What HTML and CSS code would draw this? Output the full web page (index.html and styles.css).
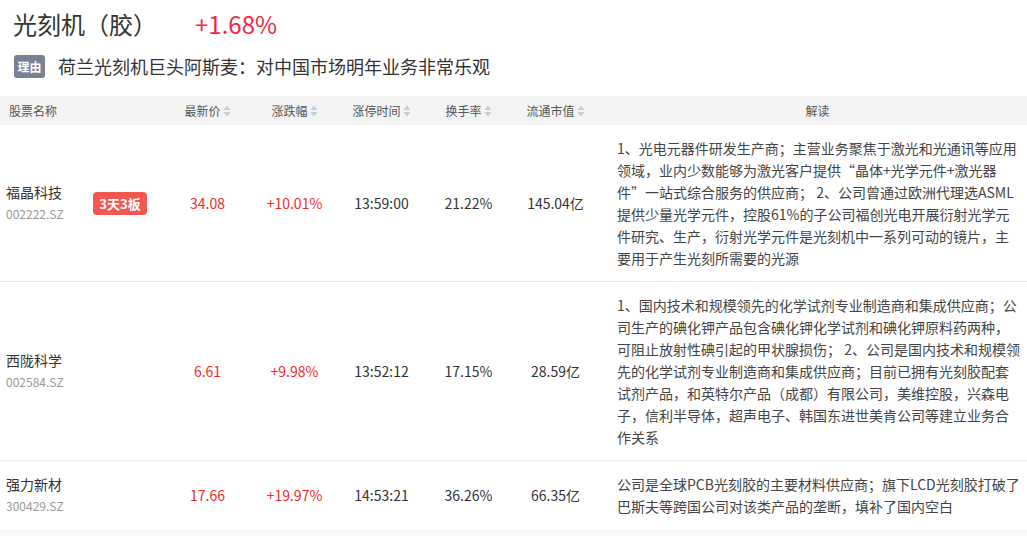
FILE: index.html
```html
<!DOCTYPE html>
<html lang="zh-CN">
<head>
<meta charset="utf-8">
<title>光刻机（胶）</title>
<link rel="stylesheet" href="styles.css">
</head>
<body>
<div class="page">
  <div class="head">
    <h1 class="title">光刻机（胶）</h1>
    <span class="pct">+1.68%</span>
  </div>
  <div class="reason">
    <span class="reason-tag">理由</span>
    <span class="reason-text">荷兰光刻机巨头阿斯麦：对中国市场明年业务非常乐观</span>
  </div>

  <div class="table">
    <div class="row thead">
      <div class="th th-name">股票名称</div>
      <div class="th"></div>
      <div class="th sortable">最新价<svg class="sort" viewBox="0 0 8 12"><path d="M4 0.5 L7.5 5 L0.5 5 Z M4 11.5 L7.5 7 L0.5 7 Z"/></svg></div>
      <div class="th sortable">涨跌幅<svg class="sort" viewBox="0 0 8 12"><path d="M4 0.5 L7.5 5 L0.5 5 Z M4 11.5 L7.5 7 L0.5 7 Z"/></svg></div>
      <div class="th sortable">涨停时间<svg class="sort" viewBox="0 0 8 12"><path d="M4 0.5 L7.5 5 L0.5 5 Z M4 11.5 L7.5 7 L0.5 7 Z"/></svg></div>
      <div class="th sortable">换手率<svg class="sort" viewBox="0 0 8 12"><path d="M4 0.5 L7.5 5 L0.5 5 Z M4 11.5 L7.5 7 L0.5 7 Z"/></svg></div>
      <div class="th sortable">流通市值<svg class="sort" viewBox="0 0 8 12"><path d="M4 0.5 L7.5 5 L0.5 5 Z M4 11.5 L7.5 7 L0.5 7 Z"/></svg></div>
      <div class="th th-desc">解读</div>
    </div>

    <div class="row">
      <div class="cell name-cell">
        <div class="name">福晶科技</div>
        <div class="code">002222.SZ</div>
      </div>
      <div class="cell tag-cell"><span class="board">3天3板</span></div>
      <div class="cell num red">34.08</div>
      <div class="cell num red">+10.01%</div>
      <div class="cell num">13:59:00</div>
      <div class="cell num">21.22%</div>
      <div class="cell num">145.04亿</div>
      <div class="cell desc">1、光电元器件研发生产商；主营业务聚焦于激光和光通讯等应用领域，业内少数能够为激光客户提供<span class="q">“</span>晶体+光学元件+激光器件<span class="q">”</span>一站式综合服务的供应商； 2、公司曾通过欧洲代理选ASML提供少量光学元件，控股61%的子公司福创光电开展衍射光学元件研究、生产，衍射光学元件是光刻机中一系列可动的镜片，主要用于产生光刻所需要的光源</div>
    </div>

    <div class="row">
      <div class="cell name-cell">
        <div class="name">西陇科学</div>
        <div class="code">002584.SZ</div>
      </div>
      <div class="cell tag-cell"></div>
      <div class="cell num red">6.61</div>
      <div class="cell num red">+9.98%</div>
      <div class="cell num">13:52:12</div>
      <div class="cell num">17.15%</div>
      <div class="cell num">28.59亿</div>
      <div class="cell desc">1、国内技术和规模领先的化学试剂专业制造商和集成供应商；公司生产的碘化钾产品包含碘化钾化学试剂和碘化钾原料药两种，可阻止放射性碘引起的甲状腺损伤； 2、公司是国内技术和规模领先的化学试剂专业制造商和集成供应商；目前已拥有光刻胶配套试剂产品，和英特尔产品（成都）有限公司，美维控股，兴森电子，信利半导体，超声电子、韩国东进世美肯公司等建立业务合作关系</div>
    </div>

    <div class="row last">
      <div class="cell name-cell">
        <div class="name">强力新材</div>
        <div class="code">300429.SZ</div>
      </div>
      <div class="cell tag-cell"></div>
      <div class="cell num red">17.66</div>
      <div class="cell num red">+19.97%</div>
      <div class="cell num">14:53:21</div>
      <div class="cell num">36.26%</div>
      <div class="cell num">66.35亿</div>
      <div class="cell desc">公司是全球PCB光刻胶的主要材料供应商；旗下LCD光刻胶打破了巴斯夫等跨国公司对该类产品的垄断，填补了国内空白</div>
    </div>
  </div>
  <div class="footer-bg"></div>
</div>
</body>
</html>
```

FILE: styles.css
```css
* { box-sizing: border-box; }

html, body {
  margin: 0;
  padding: 0;
  background: #ffffff;
  font-family: "Noto Sans CJK SC", "Noto Sans", sans-serif;
  color: #333333;
}

.page {
  width: 1027px;
  min-height: 536px;
  display: flex;
  flex-direction: column;
  background: #ffffff;
}

.head {
  display: flex;
  align-items: center;
  padding: 8px 0 0 13px;
  height: 40px;
}

.title {
  margin: 0;
  font-size: 24px;
  line-height: 32px;
  font-weight: 400;
  color: #333333;
}

.pct {
  margin-left: 38px;
  font-size: 24px;
  line-height: 32px;
  color: #f0283c;
}

.reason {
  display: flex;
  align-items: center;
  margin-top: 15px;
  padding-left: 14px;
  height: 23px;
}

.reason-tag {
  display: inline-flex;
  align-items: center;
  justify-content: center;
  width: 31px;
  height: 23px;
  border-radius: 3px;
  background: #7b8096;
  color: #ffffff;
  font-size: 12px;
  font-weight: 700;
}

.reason-text {
  margin-left: 13px;
  font-size: 18px;
  line-height: 23px;
  color: #333333;
}

.table {
  margin-top: 18px;
}

.row {
  display: grid;
  grid-template-columns: 84px 80px repeat(5, 87px) 9px 1fr;
  align-items: center;
  border-bottom: 1px solid #ebebeb;
}

.row.last {
  border-bottom: none;
}

.thead {
  height: 29px;
  background: #f4f4f4;
  border-bottom: none;
}

.th {
  font-size: 12px;
  line-height: 29px;
  color: #555555;
  text-align: center;
  display: flex;
  align-items: center;
  justify-content: center;
}

.th-name {
  justify-content: flex-start;
  padding-left: 9px;
}

.th-desc {
  grid-column: 9;
}

.sort {
  width: 8px;
  height: 12px;
  margin-left: 2px;
  fill: #c8cbd0;
}

.cell {
  font-size: 14px;
}

.name-cell {
  padding-left: 6px;
}

.name {
  font-size: 14px;
  line-height: 21px;
  color: #333333;
}

.code {
  font-size: 12px;
  line-height: 21px;
  color: #999999;
}

.tag-cell {
  display: flex;
  align-items: center;
  padding-left: 9px;
}

.board {
  display: inline-flex;
  align-items: center;
  justify-content: center;
  width: 54px;
  height: 23px;
  border-radius: 4px;
  background: #f4574f;
  color: #ffffff;
  font-size: 13px;
  font-weight: 700;
}

.num {
  text-align: center;
  color: #333333;
  line-height: 20px;
}

.num.red {
  color: #ee2b2b;
}

.desc {
  grid-column: 9;
  padding: 12px 6px 12px 9px;
  font-size: 14px;
  line-height: 22px;
  color: #444444;
}

.q {
  font-variant-east-asian: full-width;
}

.footer-bg {
  flex: 1;
  background: #f8f9fb;
}
```
